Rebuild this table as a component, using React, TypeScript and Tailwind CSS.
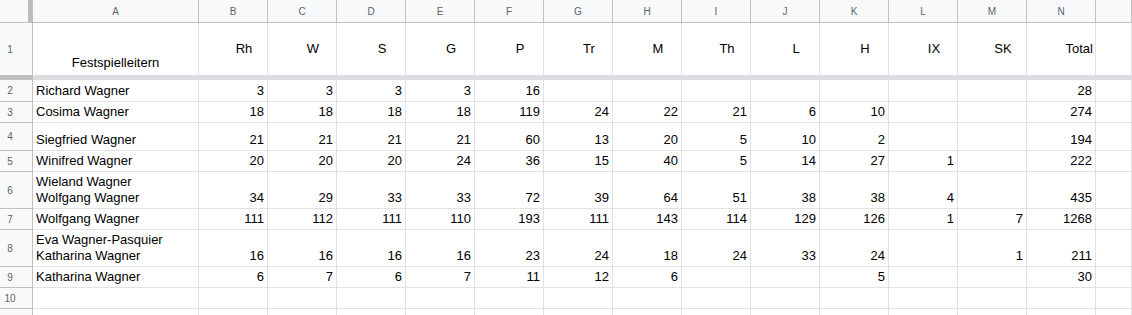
import React from "react";

const COLS = ["A", "B", "C", "D", "E", "F", "G", "H", "I", "J", "K", "L", "M", "N"];
const HEAD = ["Rh", "W", "S", "G", "P", "Tr", "M", "Th", "L", "H", "IX", "SK"];

type Row = { n: number; label: string; h: number; name: string[]; vals: (number | null)[]; total: number | null };

const rows: Row[] = [
  { n: 2, label: "2", h: 22, name: ["Richard Wagner"], vals: [3, 3, 3, 3, 16, null, null, null, null, null, null, null], total: 28 },
  { n: 3, label: "3", h: 21, name: ["Cosima Wagner"], vals: [18, 18, 18, 18, 119, 24, 22, 21, 6, 10, null, null], total: 274 },
  { n: 4, label: "4", h: 28, name: ["Siegfried Wagner"], vals: [21, 21, 21, 21, 60, 13, 20, 5, 10, 2, null, null], total: 194 },
  { n: 5, label: "5", h: 21, name: ["Winifred Wagner"], vals: [20, 20, 20, 24, 36, 15, 40, 5, 14, 27, 1, null], total: 222 },
  { n: 6, label: "6", h: 37, name: ["Wieland Wagner", "Wolfgang Wagner"], vals: [34, 29, 33, 33, 72, 39, 64, 51, 38, 38, 4, null], total: 435 },
  { n: 7, label: "7", h: 21, name: ["Wolfgang Wagner"], vals: [111, 112, 111, 110, 193, 111, 143, 114, 129, 126, 1, 7], total: 1268 },
  { n: 8, label: "8", h: 37, name: ["Eva Wagner-Pasquier", "Katharina Wagner"], vals: [16, 16, 16, 16, 23, 24, 18, 24, 33, 24, null, 1], total: 211 },
  { n: 9, label: "9", h: 21, name: ["Katharina Wagner"], vals: [6, 7, 6, 7, 11, 12, 6, null, null, 5, null, null], total: 30 },
  { n: 10, label: "10", h: 21, name: [], vals: Array(12).fill(null), total: null },
  { n: 11, label: "", h: 21, name: [], vals: Array(12).fill(null), total: null },
];

function RowHeader({ label, h }: { label: string; h: number }) {
  return (
    <div
      className="w-[33px] shrink-0 bg-[#f8f9fa] border-r border-b border-r-[#c0c0c0] border-b-[#c0c0c0] flex items-center"
      style={{ height: h }}
    >
      <span className="w-[20px] text-center text-[10px] text-[#5f6368]">{label}</span>
    </div>
  );
}

export default function App() {
  return (
    <div
      className="w-[1132px] h-[315px] overflow-hidden bg-white text-black"
      style={{ fontFamily: '"Liberation Sans", Arial, sans-serif' }}
    >
      {/* column letters */}
      <div className="flex h-[23px]">
        <div className="w-[33px] shrink-0 flex border-b border-r border-[#c0c0c0] bg-[#f8f9fa]">
          <div className="w-[28px] h-full" />
          <div className="w-[4px] h-full bg-[#bdbdbd]" />
        </div>
        {COLS.map((c, i) => (
          <div
            key={c}
            className={`${i === 0 ? "w-[166px]" : "w-[69px]"} shrink-0 flex items-center justify-center border-b border-r border-[#c0c0c0] bg-[#f8f9fa] text-[10px] text-[#5f6368]`}
          >
            {c}
          </div>
        ))}
        <div className="flex-1 border-b border-r border-[#c0c0c0] bg-[#f8f9fa]" />
      </div>

      {/* row 1 */}
      <div className="flex h-[52px]">
        <div className="w-[33px] shrink-0 bg-[#f8f9fa] border-r border-[#c0c0c0] flex items-center">
          <span className="w-[20px] text-center text-[10px] text-[#5f6368]">1</span>
        </div>
        <div className="w-[166px] shrink-0 border-r border-[#e2e2e2] flex items-end justify-center pb-[4px] text-[13px] leading-[16px]">
          Festspielleitern
        </div>
        {HEAD.map((t) => (
          <div
            key={t}
            className="w-[69px] shrink-0 border-r border-[#e2e2e2] flex items-center justify-center pl-[22px] text-[13px] leading-[16px]"
          >
            {t}
          </div>
        ))}
        <div className="w-[69px] shrink-0 border-r border-[#e2e2e2] flex items-center justify-end pr-[2px] text-[13px] leading-[16px]">
          Total
        </div>
        <div className="flex-1 border-r border-[#e2e2e2]" />
      </div>

      {/* freeze bar */}
      <div className="flex h-[5px]">
        <div className="w-[33px] shrink-0 bg-[#c0c0c0]" />
        <div className="flex-1 bg-[#dadce0]" />
      </div>

      {rows.map((r) => (
        <div key={r.n} className="flex" style={{ height: r.h }}>
          <RowHeader label={r.label} h={r.h} />
          <div className="w-[166px] shrink-0 border-r border-b border-[#e2e2e2] flex flex-col justify-end px-[3px] pb-[2px] text-[13px] leading-[16px]">
            {r.name.map((s) => (
              <div key={s} className="whitespace-nowrap">
                {s}
              </div>
            ))}
          </div>
          {[...r.vals, r.total].map((v, i) => (
            <div
              key={i}
              className="w-[69px] shrink-0 border-r border-b border-[#e2e2e2] flex items-end justify-end px-[3px] pb-[2px] text-[13px] leading-[16px]"
            >
              {v ?? ""}
            </div>
          ))}
          <div className="flex-1 border-r border-b border-[#e2e2e2]" />
        </div>
      ))}
    </div>
  );
}
